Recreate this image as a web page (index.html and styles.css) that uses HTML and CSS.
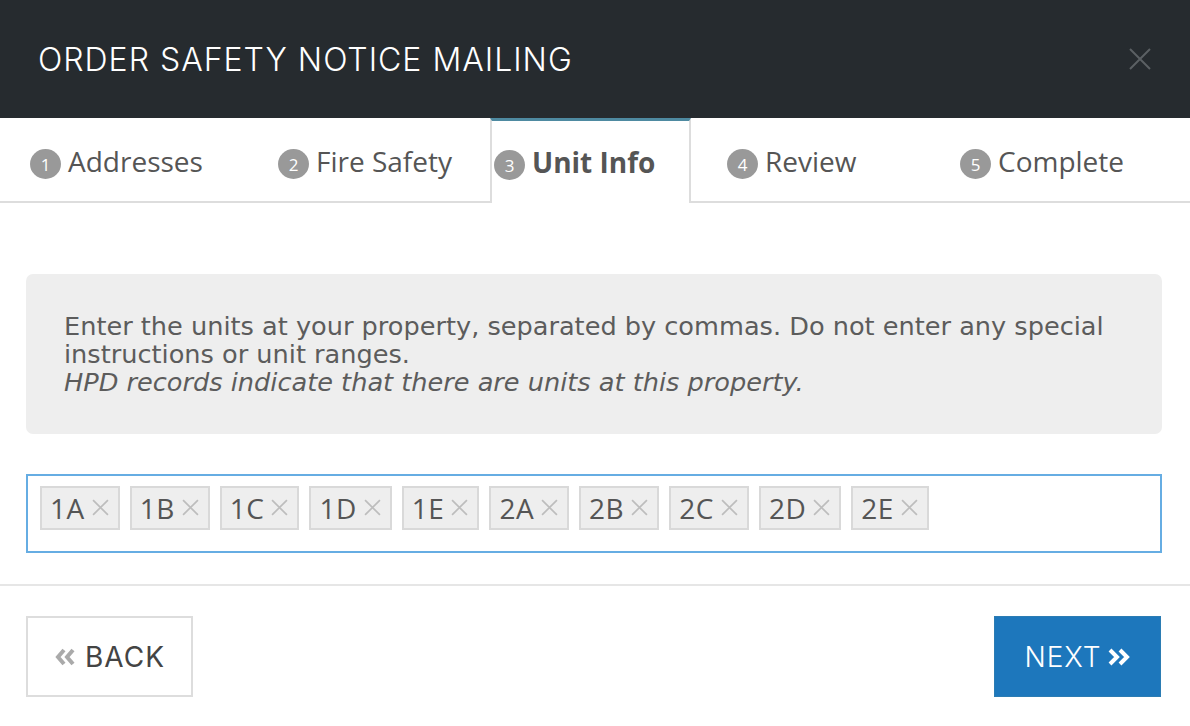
FILE: index.html
```html
<!DOCTYPE html>
<html lang="en">
<head>
<meta charset="utf-8">
<title>Order Safety Notice Mailing</title>
<link rel="stylesheet" href="styles.css">
</head>
<body>
<div class="modal">
  <header class="modal-header">
    <h1 class="modal-title">ORDER SAFETY NOTICE MAILING</h1>
    <button class="close-btn" aria-label="Close">
      <svg width="22" height="22" viewBox="0 0 22 22"><path d="M1 1 L21 21 M21 1 L1 21" stroke="#5b6064" stroke-width="2" fill="none"/></svg>
    </button>
  </header>

  <nav class="tabs">
    <div class="tab tab-1"><span class="step-num">1</span>Addresses</div>
    <div class="tab tab-2"><span class="step-num">2</span>Fire Safety</div>
    <div class="tab tab-3 active"><span class="step-num">3</span>Unit Info</div>
    <div class="tab tab-4"><span class="step-num">4</span>Review</div>
    <div class="tab tab-5"><span class="step-num">5</span>Complete</div>
  </nav>

  <main class="modal-body">
    <div class="info-box">
      <p class="info-text">Enter the units at your property, separated by commas. Do not enter any special instructions or unit ranges.</p>
      <p class="info-note">HPD records indicate that there are units at this property.</p>
    </div>

    <div class="tag-input">
      <span class="tag">1A<svg class="tag-x" viewBox="0 0 16 16"><path d="M1 1 L15 15 M15 1 L1 15"/></svg></span>
      <span class="tag">1B<svg class="tag-x" viewBox="0 0 16 16"><path d="M1 1 L15 15 M15 1 L1 15"/></svg></span>
      <span class="tag">1C<svg class="tag-x" viewBox="0 0 16 16"><path d="M1 1 L15 15 M15 1 L1 15"/></svg></span>
      <span class="tag">1D<svg class="tag-x" viewBox="0 0 16 16"><path d="M1 1 L15 15 M15 1 L1 15"/></svg></span>
      <span class="tag">1E<svg class="tag-x" viewBox="0 0 16 16"><path d="M1 1 L15 15 M15 1 L1 15"/></svg></span>
      <span class="tag">2A<svg class="tag-x" viewBox="0 0 16 16"><path d="M1 1 L15 15 M15 1 L1 15"/></svg></span>
      <span class="tag">2B<svg class="tag-x" viewBox="0 0 16 16"><path d="M1 1 L15 15 M15 1 L1 15"/></svg></span>
      <span class="tag">2C<svg class="tag-x" viewBox="0 0 16 16"><path d="M1 1 L15 15 M15 1 L1 15"/></svg></span>
      <span class="tag">2D<svg class="tag-x" viewBox="0 0 16 16"><path d="M1 1 L15 15 M15 1 L1 15"/></svg></span>
      <span class="tag">2E<svg class="tag-x" viewBox="0 0 16 16"><path d="M1 1 L15 15 M15 1 L1 15"/></svg></span>
    </div>
  </main>

  <footer class="modal-footer">
    <button class="btn btn-back">
      <svg class="chev" width="22" height="18" viewBox="0 0 22 18"><path d="M10 2 L4 9 L10 16 M19 2 L13 9 L19 16" stroke="#aaaaaa" stroke-width="4" fill="none" stroke-linejoin="miter"/></svg>
      BACK
    </button>
    <button class="btn btn-next">
      NEXT
      <svg class="chev" width="24" height="18" viewBox="0 0 24 18"><path d="M3 2 L10 9 L3 16 M13 2 L20 9 L13 16" stroke="#ffffff" stroke-width="4" fill="none" stroke-linejoin="miter"/></svg>
    </button>
  </footer>
</div>
</body>
</html>
```

FILE: styles.css
```css
* { box-sizing: border-box; }

html, body {
  margin: 0;
  padding: 0;
  background: #ffffff;
}

body {
  width: 1190px;
  height: 726px;
  overflow: hidden;
  font-family: Inter, "Liberation Sans", sans-serif;
  color: #555555;
}

.modal {
  display: flex;
  flex-direction: column;
}

.modal-header {
  height: 118px;
  background: #262b2f;
  display: flex;
  align-items: center;
  justify-content: space-between;
  padding: 0 39px 0 38px;
}

.modal-title {
  margin: 0;
  font-family: Inter, "Liberation Sans", sans-serif;
  font-weight: 300;
  font-size: 32px;
  letter-spacing: 1px;
  color: #ffffff;
}

.close-btn {
  border: 0;
  background: none;
  padding: 0;
  width: 22px;
  height: 22px;
  display: flex;
}

.tabs {
  display: grid;
  grid-template-columns: 269px 221px 201px 232px 1fr;
  height: 85px;
}

.tab {
  display: flex;
  align-items: center;
  font-family: "Open Sans", sans-serif;
  font-size: 28px;
  color: #555555;
  border-bottom: 2px solid #dddddd;
  padding-top: 3px;
  white-space: nowrap;
}

.tab-1 { padding-left: 30px; }
.tab-2 { padding-left: 9px; }
.tab-3 { padding-left: 2px; }
.tab-4 { padding-left: 36px; }
.tab-5 { padding-left: 37px; }

.tab.active {
  font-weight: 700;
  border-top: 3px solid #4e8aa1;
  border-left: 2px solid #dddddd;
  border-right: 2px solid #dddddd;
  border-bottom: 0;
  padding-top: 0;
}

.step-num {
  width: 31px;
  height: 30px;
  border-radius: 50%;
  background: #999999;
  color: #ffffff;
  font-size: 17px;
  font-weight: 400;
  display: inline-flex;
  align-items: center;
  justify-content: center;
  margin: 6px 7px 0 0;
}

.modal-body {
  padding: 71px 28px 31px 26px;
  border-bottom: 2px solid #e6e6e6;
}

.info-box {
  background: #eeeeee;
  border-radius: 7px;
  height: 160px;
  padding: 38px 38px 0 38px;
  font-family: "DejaVu Sans", Verdana, sans-serif;
  font-size: 25.6px;
  line-height: 28px;
  color: #5c5c5c;
}

.info-text, .info-note { margin: 0; }
.info-note { font-style: italic; }

.tag-input {
  margin-top: 40px;
  height: 79px;
  border: 2px solid #66ade3;
  padding: 10px 12px;
  display: flex;
  align-items: flex-start;
  gap: 10px;
}

.tag {
  height: 44px;
  display: inline-flex;
  align-items: center;
  background: #eeeeee;
  border: 2px solid #d9d9d9;
  padding: 0 9px 0 8px;
  font-family: "Open Sans", sans-serif;
  font-size: 28px;
  letter-spacing: 0.5px;
  color: #555555;
}

.tag-x {
  width: 17px;
  height: 17px;
  margin-left: 7px;
  margin-top: -2px;
}
.tag-x path {
  stroke: #bdbdbd;
  stroke-width: 1.6;
  fill: none;
}

.modal-footer {
  display: flex;
  justify-content: space-between;
  padding: 30px 29px 0 26px;
}

.btn {
  height: 81px;
  width: 167px;
  display: inline-flex;
  align-items: center;
  justify-content: center;
  gap: 9px;
  font-family: Inter, "Liberation Sans", sans-serif;
  font-size: 28px;
  letter-spacing: 1px;
  font-weight: 400;
  cursor: pointer;
}

.btn-back {
  background: #ffffff;
  border: 2px solid #dddddd;
  color: #444444;
}

.btn-next {
  background: #1d77bc;
  border: 1px solid #2b7cb3;
  color: #ffffff;
  font-weight: 300;
  gap: 5px;
  padding-left: 6px;
}
```
